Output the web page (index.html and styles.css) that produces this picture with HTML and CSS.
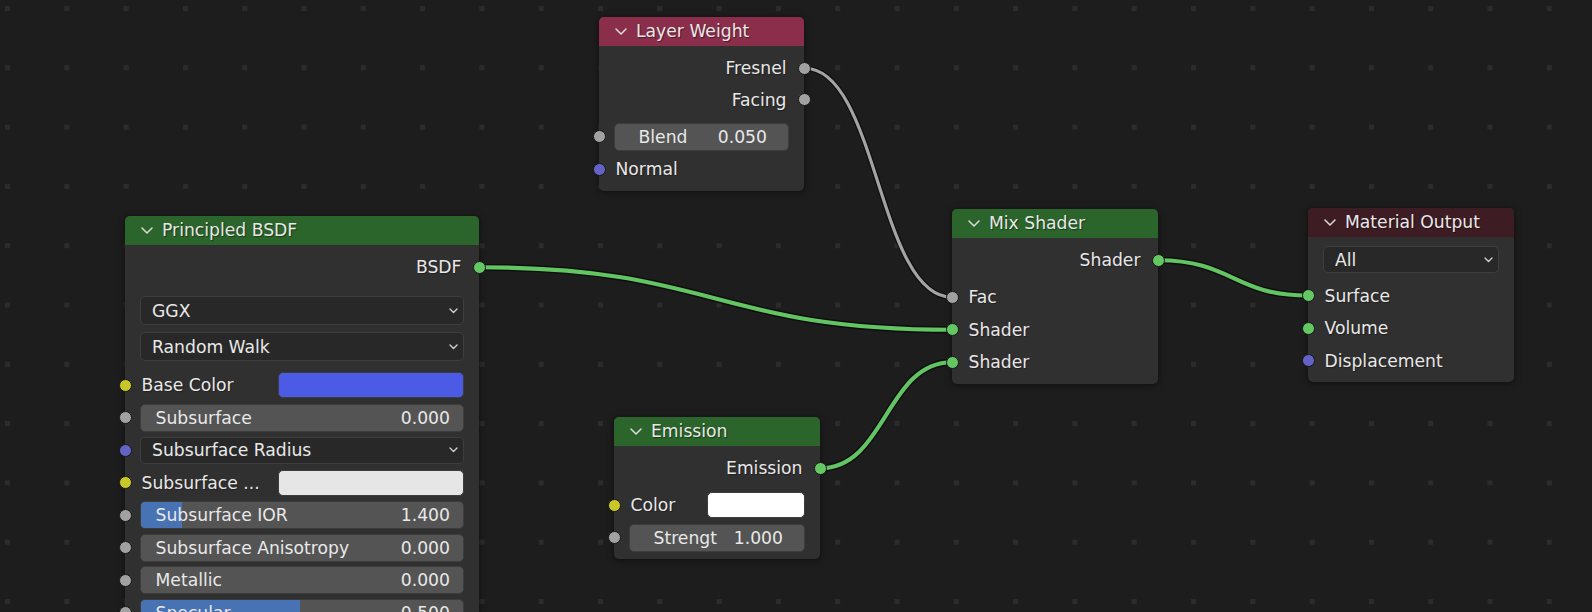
FILE: index.html
```html
<!DOCTYPE html>
<html lang="en">
<head>
<meta charset="utf-8">
<title>Shader Editor</title>
<link rel="stylesheet" href="styles.css">
</head>
<body>
<div class="editor">
  <svg class="backdrop" width="1592" height="612" viewBox="0 0 1592 612">
    <defs>
      <pattern id="dots" x="5" y="6" width="59.3" height="59.3" patternUnits="userSpaceOnUse">
        <rect width="5" height="5" fill="#2c2c2c"/>
      </pattern>
    </defs>
    <rect width="1592" height="612" fill="url(#dots)"/>
    <g class="wire wire-float">
      <path class="wire-edge" d="M804.5 68.25 C878 68.25, 878 297.25, 952 297.25"/>
      <path class="wire-core" d="M804.5 68.25 C878 68.25, 878 297.25, 952 297.25"/>
    </g>
    <g class="wire wire-shader">
      <path class="wire-edge" d="M479 267.25 C715.5 267.25, 715.5 329.75, 952 329.75"/>
      <path class="wire-core" d="M479 267.25 C715.5 267.25, 715.5 329.75, 952 329.75"/>
      <path class="wire-edge" d="M820 468.25 C886 468.25, 886 362.25, 952 362.25"/>
      <path class="wire-core" d="M820 468.25 C886 468.25, 886 362.25, 952 362.25"/>
      <path class="wire-edge" d="M1158 260.25 C1233 260.25, 1233 295.5, 1308 295.5"/>
      <path class="wire-core" d="M1158 260.25 C1233 260.25, 1233 295.5, 1308 295.5"/>
    </g>
  </svg>

  <!-- Layer Weight -->
  <section class="node node-layer">
    <header class="node-head head-input">
      <svg class="chev" viewBox="0 0 12 7"><path d="M1 1 L6 6 L11 1"/></svg>
      <span>Layer Weight</span>
    </header>
    <div class="node-body">
      <div class="outputs">
        <div class="row out"><span class="label">Fresnel</span><i class="sock s-float"></i></div>
        <div class="row out"><span class="label">Facing</span><i class="sock s-float"></i></div>
      </div>
      <div class="row"><i class="sock s-float"></i>
        <div class="slider narrow"><span class="s-text">Blend</span><span class="s-text">0.050</span></div>
      </div>
      <div class="row"><i class="sock s-vector"></i><span class="label">Normal</span></div>
    </div>
  </section>

  <!-- Principled BSDF -->
  <section class="node node-principled">
    <header class="node-head head-shader">
      <svg class="chev" viewBox="0 0 12 7"><path d="M1 1 L6 6 L11 1"/></svg>
      <span>Principled BSDF</span>
    </header>
    <div class="node-body">
      <div class="outputs">
        <div class="row out"><span class="label">BSDF</span><i class="sock s-shader"></i></div>
      </div>
      <div class="menus menus-principled">
        <div class="dropdown tall"><span>GGX</span><svg class="dd-chev" viewBox="0 0 9 6"><path d="M1 1 L4.5 4.5 L8 1"/></svg></div>
        <div class="dropdown tall"><span>Random Walk</span><svg class="dd-chev" viewBox="0 0 9 6"><path d="M1 1 L4.5 4.5 L8 1"/></svg></div>
      </div>
      <div class="row"><i class="sock s-color"></i><span class="label grow">Base Color</span><span class="swatch wide sw-blue"></span></div>
      <div class="row"><i class="sock s-float"></i>
        <div class="slider"><span class="s-text">Subsurface</span><span class="s-text">0.000</span></div>
      </div>
      <div class="row"><i class="sock s-vector"></i>
        <div class="dropdown"><span>Subsurface Radius</span><svg class="dd-chev" viewBox="0 0 9 6"><path d="M1 1 L4.5 4.5 L8 1"/></svg></div>
      </div>
      <div class="row"><i class="sock s-color"></i><span class="label grow">Subsurface ...</span><span class="swatch wide sw-light"></span></div>
      <div class="row"><i class="sock s-float"></i>
        <div class="slider"><span class="fill" style="width:12.7%"></span><span class="s-text">Subsurface IOR</span><span class="s-text">1.400</span></div>
      </div>
      <div class="row"><i class="sock s-float"></i>
        <div class="slider"><span class="s-text">Subsurface Anisotropy</span><span class="s-text">0.000</span></div>
      </div>
      <div class="row"><i class="sock s-float"></i>
        <div class="slider"><span class="s-text">Metallic</span><span class="s-text">0.000</span></div>
      </div>
      <div class="row"><i class="sock s-float"></i>
        <div class="slider"><span class="fill" style="width:49.4%"></span><span class="s-text">Specular</span><span class="s-text">0.500</span></div>
      </div>
    </div>
  </section>

  <!-- Emission -->
  <section class="node node-emission">
    <header class="node-head head-shader">
      <svg class="chev" viewBox="0 0 12 7"><path d="M1 1 L6 6 L11 1"/></svg>
      <span>Emission</span>
    </header>
    <div class="node-body">
      <div class="outputs">
        <div class="row out"><span class="label">Emission</span><i class="sock s-shader"></i></div>
      </div>
      <div class="row"><i class="sock s-color"></i><span class="label grow">Color</span><span class="swatch narrow sw-white"></span></div>
      <div class="row"><i class="sock s-float"></i>
        <div class="slider narrow"><span class="s-text">Strengt</span><span class="s-text">1.000</span></div>
      </div>
    </div>
  </section>

  <!-- Mix Shader -->
  <section class="node node-mix">
    <header class="node-head head-shader">
      <svg class="chev" viewBox="0 0 12 7"><path d="M1 1 L6 6 L11 1"/></svg>
      <span>Mix Shader</span>
    </header>
    <div class="node-body">
      <div class="outputs">
        <div class="row out"><span class="label">Shader</span><i class="sock s-shader"></i></div>
      </div>
      <div class="row"><i class="sock s-float"></i><span class="label">Fac</span></div>
      <div class="row"><i class="sock s-shader"></i><span class="label">Shader</span></div>
      <div class="row"><i class="sock s-shader"></i><span class="label">Shader</span></div>
    </div>
  </section>

  <!-- Material Output -->
  <section class="node node-output">
    <header class="node-head head-output">
      <svg class="chev" viewBox="0 0 12 7"><path d="M1 1 L6 6 L11 1"/></svg>
      <span>Material Output</span>
    </header>
    <div class="node-body">
      <div class="menus menus-output">
        <div class="dropdown"><span>All</span><svg class="dd-chev" viewBox="0 0 9 6"><path d="M1 1 L4.5 4.5 L8 1"/></svg></div>
      </div>
      <div class="row"><i class="sock s-shader"></i><span class="label">Surface</span></div>
      <div class="row"><i class="sock s-shader"></i><span class="label">Volume</span></div>
      <div class="row"><i class="sock s-vector"></i><span class="label">Displacement</span></div>
    </div>
  </section>
</div>
</body>
</html>
```

FILE: styles.css
```css
* {
  box-sizing: border-box;
  margin: 0;
  padding: 0;
}

html,
body {
  width: 1592px;
  height: 612px;
  overflow: hidden;
  background: #1d1d1d;
}

body {
  font-family: "DejaVu Sans", "Liberation Sans", sans-serif;
  font-size: 17.2px;
  color: #e8e8e8;
}

.editor {
  position: relative;
  width: 1592px;
  height: 612px;
  overflow: hidden;
}

.backdrop {
  position: absolute;
  left: 0;
  top: 0;
}

/* wires */
.wire path {
  fill: none;
  stroke-linecap: round;
}

.wire-edge {
  stroke: rgba(10, 10, 10, 0.75);
  stroke-width: 7;
}

.wire-shader .wire-core {
  stroke: #62c462;
  stroke-width: 4.2;
}

.wire-float .wire-edge {
  stroke-width: 5.6;
}

.wire-float .wire-core {
  stroke: #a3a3a3;
  stroke-width: 3.2;
}

/* nodes on the canvas */
.node {
  position: absolute;
  background: #303030;
  border-radius: 5px;
  box-shadow: 0 1px 6px rgba(0, 0, 0, 0.55);
}

.node-layer { left: 599px; top: 17px; width: 205px; }
.node-principled { left: 125px; top: 216px; width: 354px; }
.node-emission { left: 614px; top: 417px; width: 206px; }
.node-mix { left: 952px; top: 209px; width: 206px; }
.node-output { left: 1308px; top: 208px; width: 206px; }

.node-head {
  height: 29px;
  display: flex;
  align-items: center;
  gap: 9px;
  padding-left: 16px;
  padding-bottom: 1px;
  border-radius: 5px 5px 0 0;
  white-space: nowrap;
  text-shadow: 1px 1px 1px rgba(0, 0, 0, 0.45);
}

.head-input { background: #8a2e4b; }
.head-shader { background: #2b652b; }
.head-output { background: #3e1c24; }

.chev {
  width: 12px;
  height: 7px;
  flex: none;
  fill: none;
  stroke: #dadada;
  stroke-width: 1.5;
  stroke-linecap: round;
  stroke-linejoin: round;
}

.node-body {
  padding: 6.5px 0 5px;
}

.outputs {
  display: flex;
  flex-direction: column;
  margin-bottom: 5px;
}

.row {
  position: relative;
  display: flex;
  align-items: center;
  height: 32.5px;
  padding: 0 15px;
}

.row.out {
  height: 31.5px;
  justify-content: flex-end;
  padding-right: 17.5px;
}

.label {
  padding-left: 1.5px;
  white-space: nowrap;
  text-shadow: 1px 1px 1px rgba(0, 0, 0, 0.35);
}

.row.out .label {
  padding-left: 0;
}

.label.grow {
  flex: 1;
  overflow: hidden;
}

/* sockets */
.sock {
  position: absolute;
  top: 50%;
  left: -6.5px;
  width: 13px;
  height: 13px;
  margin-top: -6.5px;
  border-radius: 50%;
  border: 1px solid #181818;
}

.row.out .sock {
  left: auto;
  right: -6.5px;
}

.s-float { background: #a1a1a1; }
.s-shader { background: #63c763; }
.s-color { background: #c7c729; }
.s-vector { background: #6363c7; }

/* number sliders */
.slider {
  position: relative;
  flex: 1;
  height: 28px;
  display: flex;
  align-items: center;
  justify-content: space-between;
  padding: 0 13px 0 14.5px;
  background: #545454;
  border: 1px solid #3d3d3d;
  border-radius: 5px;
  overflow: hidden;
  white-space: nowrap;
}

.slider.narrow {
  padding: 0 21px 0 23.5px;
}

.fill {
  position: absolute;
  left: 0;
  top: 0;
  bottom: 0;
  background: #4772b3;
}

.s-text {
  position: relative;
}

/* dropdown menus */
.menus {
  display: flex;
  flex-direction: column;
  gap: 7px;
  padding: 0 15px;
}

.menus-principled {
  margin: 13px 0 8px;
}

.menus-output {
  margin: 2.5px 0 6.25px;
}

.dropdown {
  flex: 1;
  height: 27px;
  display: flex;
  align-items: center;
  justify-content: space-between;
  padding: 0 5px 0 11px;
  background: #282828;
  border: 1px solid #3e3e3e;
  border-radius: 5px;
  white-space: nowrap;
}

.menus .dropdown {
  flex: none;
}

.dropdown.tall {
  height: 29px;
}

.dd-chev {
  width: 9px;
  height: 6px;
  fill: none;
  stroke: #d0d0d0;
  stroke-width: 1.4;
  stroke-linecap: round;
  stroke-linejoin: round;
}

/* color swatches */
.swatch {
  height: 26px;
  border-radius: 5px;
  border: 1px solid #3d3d3d;
  flex: none;
}

.swatch.wide { width: 186px; }
.swatch.narrow { width: 98px; }

.sw-blue { background: #4c5be6; }
.sw-light { background: #e6e6e6; }
.sw-white { background: #ffffff; }
```
